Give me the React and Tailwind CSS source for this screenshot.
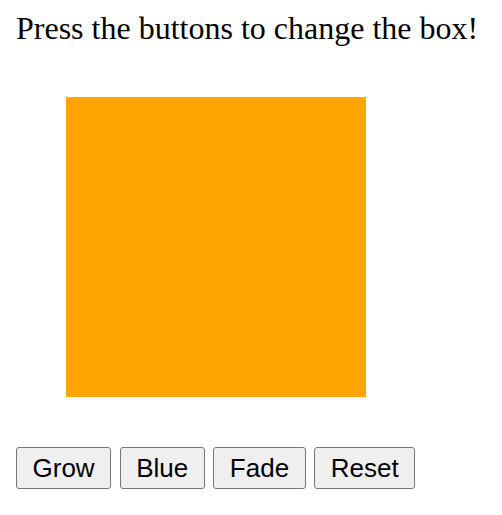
import React from 'react';

function Button({ children }) {
  return (
    <button className="bg-[#efefef] border border-[#767676] rounded-[3px] px-[15.5px] py-[5px] text-[26px] leading-[30.4px] text-black font-['Liberation_Sans',Arial,sans-serif]">
      {children}
    </button>
  );
}

export default function App() {
  return (
    <div className="min-h-screen bg-white px-4 pt-[10px] font-['Liberation_Serif','Times_New_Roman',serif] text-black">
      <p className="text-[32px] leading-[37px]">Press the buttons to change the box!</p>

      <div className="mt-[50px] ml-[50px] w-[300px] h-[300px] bg-[#ffa500]"></div>

      <div className="mt-[50px] flex gap-[8.6px]">
        <Button>Grow</Button>
        <Button>Blue</Button>
        <Button>Fade</Button>
        <Button>Reset</Button>
      </div>
    </div>
  );
}
